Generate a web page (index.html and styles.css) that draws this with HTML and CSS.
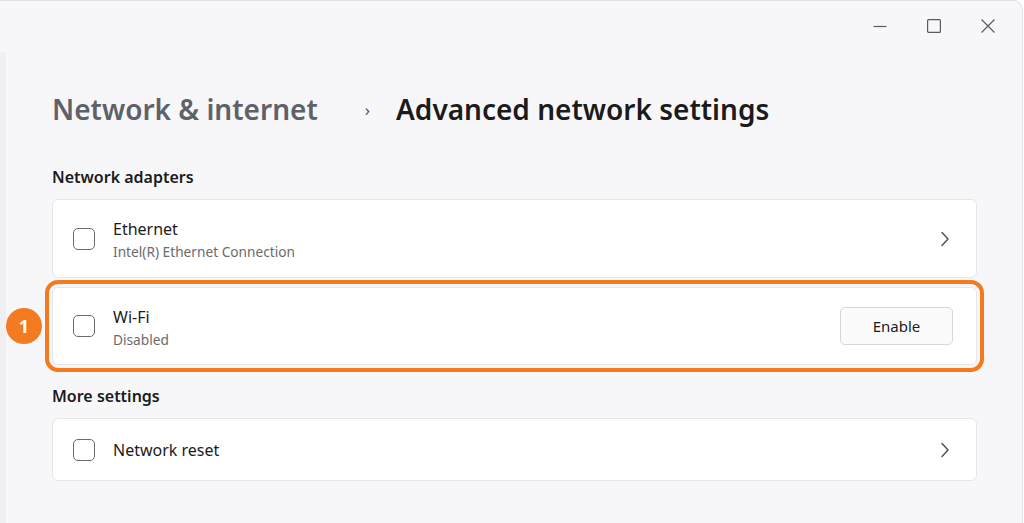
FILE: index.html
```html
<!DOCTYPE html>
<html lang="en">
<head>
<meta charset="utf-8">
<title>Advanced network settings</title>
<link rel="stylesheet" href="styles.css">
</head>
<body>
<div class="window">
  <div class="titlebar">
    <button class="ctl" aria-label="Minimize">
      <svg width="16" height="16" viewBox="0 0 16 16"><path d="M1.5 8.5h13" stroke="#5b5b5b" stroke-width="1.2" fill="none"/></svg>
    </button>
    <button class="ctl" aria-label="Maximize">
      <svg width="16" height="16" viewBox="0 0 16 16"><rect x="1.6" y="1.6" width="12.8" height="12.8" rx="1" stroke="#5b5b5b" stroke-width="1.2" fill="none"/></svg>
    </button>
    <button class="ctl" aria-label="Close">
      <svg width="16" height="16" viewBox="0 0 16 16"><path d="M1.5 1.5l13 13M14.5 1.5l-13 13" stroke="#5b5b5b" stroke-width="1.2" fill="none"/></svg>
    </button>
  </div>
  <div class="body">
    <div class="edge"></div>
    <main class="main">
      <h1 class="crumbs">
        <span class="crumb-parent">Network &amp; internet</span>
        <span class="crumb-sep">›</span>
        <span class="crumb-current">Advanced network settings</span>
      </h1>

      <h2 class="section">Network adapters</h2>
      <div class="list">
        <div class="card">
          <span class="box"></span>
          <div class="text">
            <div class="title">Ethernet</div>
            <div class="sub">Intel(R) Ethernet Connection</div>
          </div>
          <svg class="chev" width="10" height="16" viewBox="0 0 10 16"><path d="M2 1.5l6 6.5-6 6.5" stroke="#555" stroke-width="1.5" fill="none" stroke-linecap="round" stroke-linejoin="round"/></svg>
        </div>
        <div class="card highlight">
          <span class="badge">1</span>
          <span class="box"></span>
          <div class="text">
            <div class="title">Wi-Fi</div>
            <div class="sub">Disabled</div>
          </div>
          <button class="btn">Enable</button>
        </div>
      </div>

      <h2 class="section section-more">More settings</h2>
      <div class="list">
        <div class="card card-short">
          <span class="box"></span>
          <div class="text">
            <div class="title">Network reset</div>
          </div>
          <svg class="chev" width="10" height="16" viewBox="0 0 10 16"><path d="M2 1.5l6 6.5-6 6.5" stroke="#555" stroke-width="1.5" fill="none" stroke-linecap="round" stroke-linejoin="round"/></svg>
        </div>
      </div>
    </main>
  </div>
</div>
</body>
</html>
```

FILE: styles.css
```css
* { box-sizing: border-box; }
html, body { margin: 0; padding: 0; background: #ffffff; }
body {
  font-family: "Noto Sans", "Open Sans", "DejaVu Sans", sans-serif;
  color: #1b1b1b;
  width: 1024px;
  height: 523px;
  overflow: hidden;
}
.window {
  width: 1023px;
  height: 523px;
  background: #f7f7f9;
  border-top: 1px solid #e2e2e4;
  border-right: 1px solid #e2e2e4;
  border-top-right-radius: 10px;
  display: flex;
  flex-direction: column;
}
.titlebar {
  height: 51px;
  display: flex;
  justify-content: flex-end;
  align-items: center;
  padding-right: 7px;
  padding-bottom: 2px;
}
.ctl {
  width: 54px;
  height: 40px;
  border: 0;
  background: transparent;
  display: flex;
  align-items: center;
  justify-content: center;
  padding: 0;
}
.body {
  flex: 1;
  display: flex;
}
.edge {
  width: 6px;
  background: #f0f0f2;
}
.main {
  flex: 1;
  padding: 0 45px 0 46px;
}
.crumbs {
  margin: 35px 0 0;
  height: 44px;
  display: flex;
  align-items: center;
  font-size: 28px;
  font-weight: 600;
}
.crumb-parent { color: #5e6168; }
.crumb-sep {
  color: #555;
  font-size: 17px;
  font-weight: 400;
  margin: 0 26px 0 47px;
}
.crumb-current { color: #1b1b1b; }
.section {
  margin: 36px 0 0;
  font-size: 16px;
  font-weight: 600;
  line-height: 20px;
  color: #1b1b1b;
}
.section-more { margin-top: 21px; }
.list {
  margin-top: 12px;
  display: flex;
  flex-direction: column;
  gap: 9px;
}
.card {
  position: relative;
  height: 79px;
  background: #ffffff;
  border: 1px solid #e6e6e8;
  border-radius: 6px;
  display: flex;
  align-items: center;
  padding: 0 26px 0 20px;
}
.card-short { height: 63px; }
.highlight {
  height: 78px;
  outline: 4px solid #f47a20;
  outline-offset: 3px;
}
.box {
  width: 22px;
  height: 22px;
  border: 1.5px solid #6a6a6a;
  border-radius: 5px;
  flex: none;
  margin-right: 18px;
}
.text { flex: 1; }
.card .text:has(.sub) { padding-top: 3px; }
.title {
  font-size: 16px;
  line-height: 20px;
  color: #1b1b1b;
}
.sub {
  font-size: 13.7px;
  line-height: 18px;
  margin-top: 4px;
  color: #6b6b6b;
}
.chev { flex: none; }
.btn {
  width: 113px;
  height: 38px;
  margin-right: -3px;
  border: 1px solid #d6d6d8;
  border-radius: 5px;
  background: #fbfbfb;
  font-family: inherit;
  font-size: 15px;
  color: #1b1b1b;
}
.badge {
  position: absolute;
  left: -47px;
  top: 50%;
  transform: translateY(-50%);
  width: 36px;
  height: 36px;
  border-radius: 50%;
  background: #f47a20;
  color: #fff;
  font-weight: 700;
  font-size: 18px;
  display: flex;
  align-items: center;
  justify-content: center;
}
```
